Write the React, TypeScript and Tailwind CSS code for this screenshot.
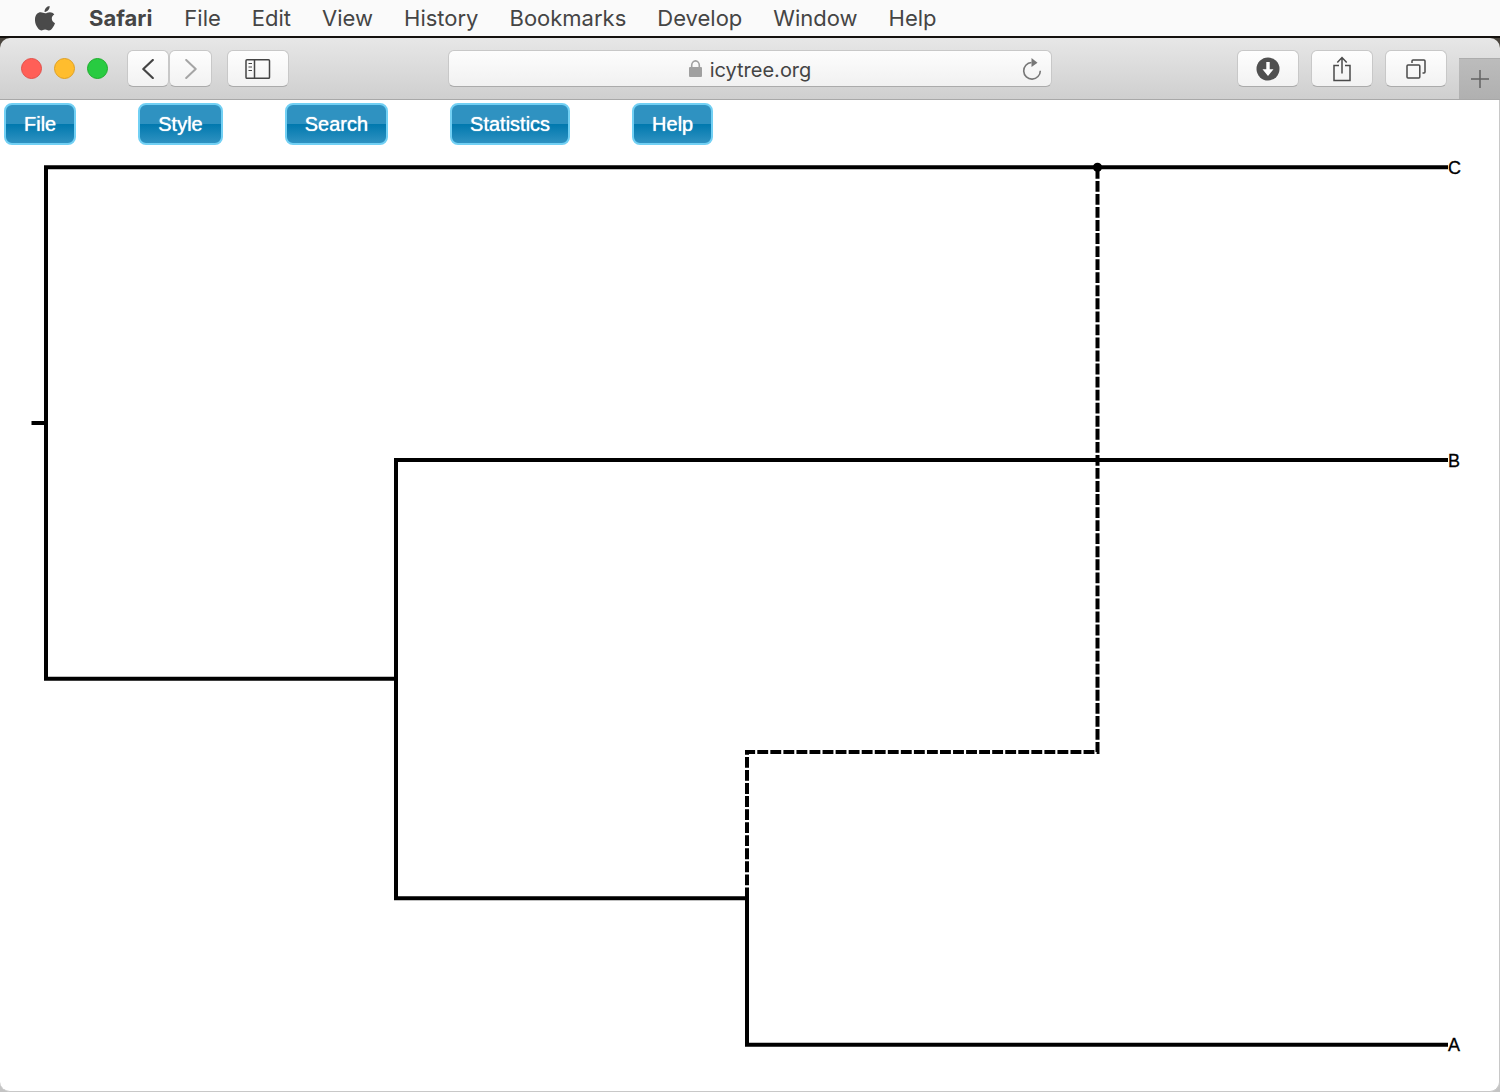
import type { ReactNode } from "react";

const systemMenus = ["File", "Edit", "View", "History", "Bookmarks", "Develop", "Window", "Help"];
const appMenus = ["File", "Style", "Search", "Statistics", "Help"];

function AppleIcon() {
  return (
    <svg viewBox="0 0 20 25" className="h-[25px] w-5" fill="#4a4a4a" aria-hidden="true">
      <path d="M14.6 0c.2 1.6-.4 3-1.3 4.100-.9 1.100-2.300 1.900-3.700 1.800-.2-1.500.5-3 1.300-3.900C11.800.9 13.400.1 14.600 0z" />
      <path d="M19.300 8.500c-1.600 1-2.500 2.300-2.500 4.100 0 2.100 1.200 3.800 3.200 4.600-.5 1.500-1.300 2.900-2.200 4.200-1.200 1.700-2.300 3-4 3-1.500 0-1.900-.9-3.700-.9-1.900 0-2.400.9-3.800.9-1.700 0-2.900-1.500-4-3.100C.7 18.800-.2 15.900 0 13.100c.2-4.200 2.800-6.800 5.700-6.800 1.800 0 3 1 4.500 1 1.400 0 2.500-1.100 4.700-1.100 1.700 0 3.400.9 4.400 2.300z" />
    </svg>
  );
}

function ToolButton({ label, size, children }: { label: string; size: string; children: ReactNode }) {
  return (
    <button
      type="button"
      aria-label={label}
      className={`flex h-[37px] items-center justify-center rounded-md border border-[#c8c8c8] border-b-[#ababab] bg-linear-to-b from-[#fefefe] to-[#f2f2f2] ${size}`}
    >
      {children}
    </button>
  );
}

function MenuBar() {
  return (
    <nav aria-label="System menu" className="flex h-9 items-center gap-[31px] bg-[#fafafa] pl-[35px] text-[22px] text-[#454545]">
      <button type="button" aria-label="Apple menu" className="mr-[3px]">
        <AppleIcon />
      </button>
      <button type="button" className="mr-px font-bold">Safari</button>
      {systemMenus.map((m) => (
        <button type="button" key={m}>{m}</button>
      ))}
    </nav>
  );
}

function Toolbar() {
  return (
    <header className="grid h-[62px] grid-cols-[448fr_604fr_448fr] items-center rounded-t-[10px] border-b border-[#a8a8a8] bg-linear-to-b from-[#e7e7e7] to-[#cfcfcf]">
      <div className="flex items-center pl-[21px]">
        <div className="flex gap-3">
          <button type="button" aria-label="Close" className="size-[21px] rounded-full border border-[#e2504a] bg-[#ff5f57]" />
          <button type="button" aria-label="Minimise" className="size-[21px] rounded-full border border-[#dfa023] bg-[#ffbd2e]" />
          <button type="button" aria-label="Zoom" className="size-[21px] rounded-full border border-[#1dad2b] bg-[#28cb41]" />
        </div>
        <div className="ml-[19px] flex">
          <ToolButton label="Back" size="w-[42px]">
            <svg viewBox="0 0 12 20" className="h-5 w-3" fill="none" stroke="#444" strokeWidth="2.200" strokeLinecap="round" strokeLinejoin="round">
              <path d="M10.800 1 1.300 10l9.500 9" />
            </svg>
          </ToolButton>
          <ToolButton label="Forward" size="w-[43px]">
            <svg viewBox="0 0 12 20" className="h-5 w-3" fill="none" stroke="#a5a5a5" strokeWidth="2" strokeLinecap="round" strokeLinejoin="round">
              <path d="m1.200 1 9.500 9-9.500 9" />
            </svg>
          </ToolButton>
        </div>
        <div className="ml-[15px]">
          <ToolButton label="Show sidebar" size="w-[62px]">
            <svg viewBox="0 0 26 20" className="h-5 w-[26px]" fill="none" stroke="#444" strokeWidth="1.500">
              <rect x="1" y="0.800" width="23.500" height="18.500" rx="1" />
              <path d="M9.500 1v18" />
              <path d="M3.500 4.500H7M3.500 8H7M3.500 11.500H7" strokeWidth="1.200" />
            </svg>
          </ToolButton>
        </div>
      </div>
      <div className="flex h-[37px] items-center rounded-md border border-[#c8c8c8] border-b-[#ababab] bg-linear-to-b from-[#fdfdfd] to-[#f1f1f1] px-[9px] text-[20px] text-[#444]">
        <div className="w-5" />
        <div className="flex flex-1 items-center justify-center gap-2">
          <svg viewBox="0 0 13 17" className="h-[17px] w-[13px]" aria-hidden="true">
            <rect y="7" width="13" height="10" rx="1" fill="#a0a0a0" />
            <path d="M2.700 8V5.200a3.800 4.300 0 0 1 7.600 0V8" fill="none" stroke="#a0a0a0" strokeWidth="1.600" />
          </svg>
          <a href="#icytree" className="pt-0.5 leading-6">icytree.org</a>
        </div>
        <button type="button" aria-label="Reload" className="w-5">
          <svg viewBox="0 0 20 22" className="h-[22px] w-5" fill="none">
            <path d="M9.500 4.500A8.300 8.300 0 1 0 18.300 12.700" stroke="#777" strokeWidth="1.600" />
            <path d="M9.500 0v9l6-4.300z" fill="#777" />
          </svg>
        </button>
      </div>
      <div className="flex h-full items-center justify-end">
        <div className="mr-3 flex gap-3">
          <ToolButton label="Downloads" size="w-[62px]">
            <svg viewBox="0 0 24 24" className="size-6">
              <circle cx="12" cy="12" r="11.500" fill="#505050" />
              <path d="M10.300 5h3.400v7.200h3.800L12 19l-5.500-6.800h3.800z" fill="#fff" />
            </svg>
          </ToolButton>
          <ToolButton label="Share" size="w-[62px]">
            <svg viewBox="0 0 18 26" className="h-[26px] w-[18px]" fill="none" stroke="#4a4a4a" strokeWidth="1.500">
              <path d="M6 9.500H1v15h16v-15h-5M9 17.500V2M4.300 6.500 9 1.500l4.700 5" />
            </svg>
          </ToolButton>
          <ToolButton label="Show tabs" size="w-[62px]">
            <svg viewBox="0 0 20 20" className="size-5" fill="none" stroke="#4a4a4a" strokeWidth="1.500">
              <rect x="1" y="6" width="12.800" height="13" rx="1" />
              <path d="M6 4V2a1 1 0 0 1 1-1h11a1 1 0 0 1 1 1v11a1 1 0 0 1-1 1h-1.500" />
            </svg>
          </ToolButton>
        </div>
        <button type="button" aria-label="New tab" className="flex h-[41px] w-[41px] items-center justify-center self-end border-t border-[#adadad] bg-linear-to-b from-[#bcbcbc] to-[#b0b0b0]">
          <svg viewBox="0 0 18 18" className="size-[18px]" stroke="#626262" strokeWidth="1.500">
            <path d="M9 0v18M0 9h18" />
          </svg>
        </button>
      </div>
    </header>
  );
}

function AppMenu() {
  return (
    <nav aria-label="IcyTree" className="flex gap-[62px] pl-1 pt-[3px] font-['Liberation_Sans',Arial,sans-serif]">
      {appMenus.map((m) => (
        <button
          type="button"
          key={m}
          className="h-[42px] rounded-lg border-2 border-[#72d0f4] px-[18px] text-[20px] text-white [background-image:linear-gradient(#2f92c1_50%,#0078ae_50%,#2f92c1)] [text-shadow:0_0_1px_#fff]"
        >
          {m}
        </button>
      ))}
    </nav>
  );
}

function Tree() {
  return (
    <svg viewBox="0 145 1499 946" className="block w-full" role="img" aria-label="Phylogenetic network with leaves A, B and C">
      <g fill="none" stroke="#000" strokeWidth="4">
        <path d="M31.500 423H46" />
        <path d="M1448 167.300H46V678.700H396" />
        <path d="M1448 460H396V898.300H747" />
        <path d="M747 888V1044.700H1448" />
        <path d="M747 898.300V752H1097.500V167.300" strokeDasharray="10.870 2.180" />
      </g>
      <circle cx="1097.500" cy="167.300" r="4.600" />
      <g fontFamily="'Liberation Sans', Arial, sans-serif" fontSize="18" stroke="#000" strokeWidth="0.300">
        <text x="1448" y="174">C</text>
        <text x="1448" y="467">B</text>
        <text x="1448" y="1051">A</text>
      </g>
    </svg>
  );
}

export default function App() {
  return (
    <div className="flex min-h-screen flex-col bg-[#c4c4c4] font-[Inter,sans-serif]">
      <MenuBar />
      <div className="border-t-2 border-[#14110e] bg-[#4a453e]">
        <Toolbar />
      </div>
      <main className="flex-1 rounded-b-[10px] border-b border-r border-[#c8c8c8] bg-white">
        <AppMenu />
        <Tree />
      </main>
    </div>
  );
}
